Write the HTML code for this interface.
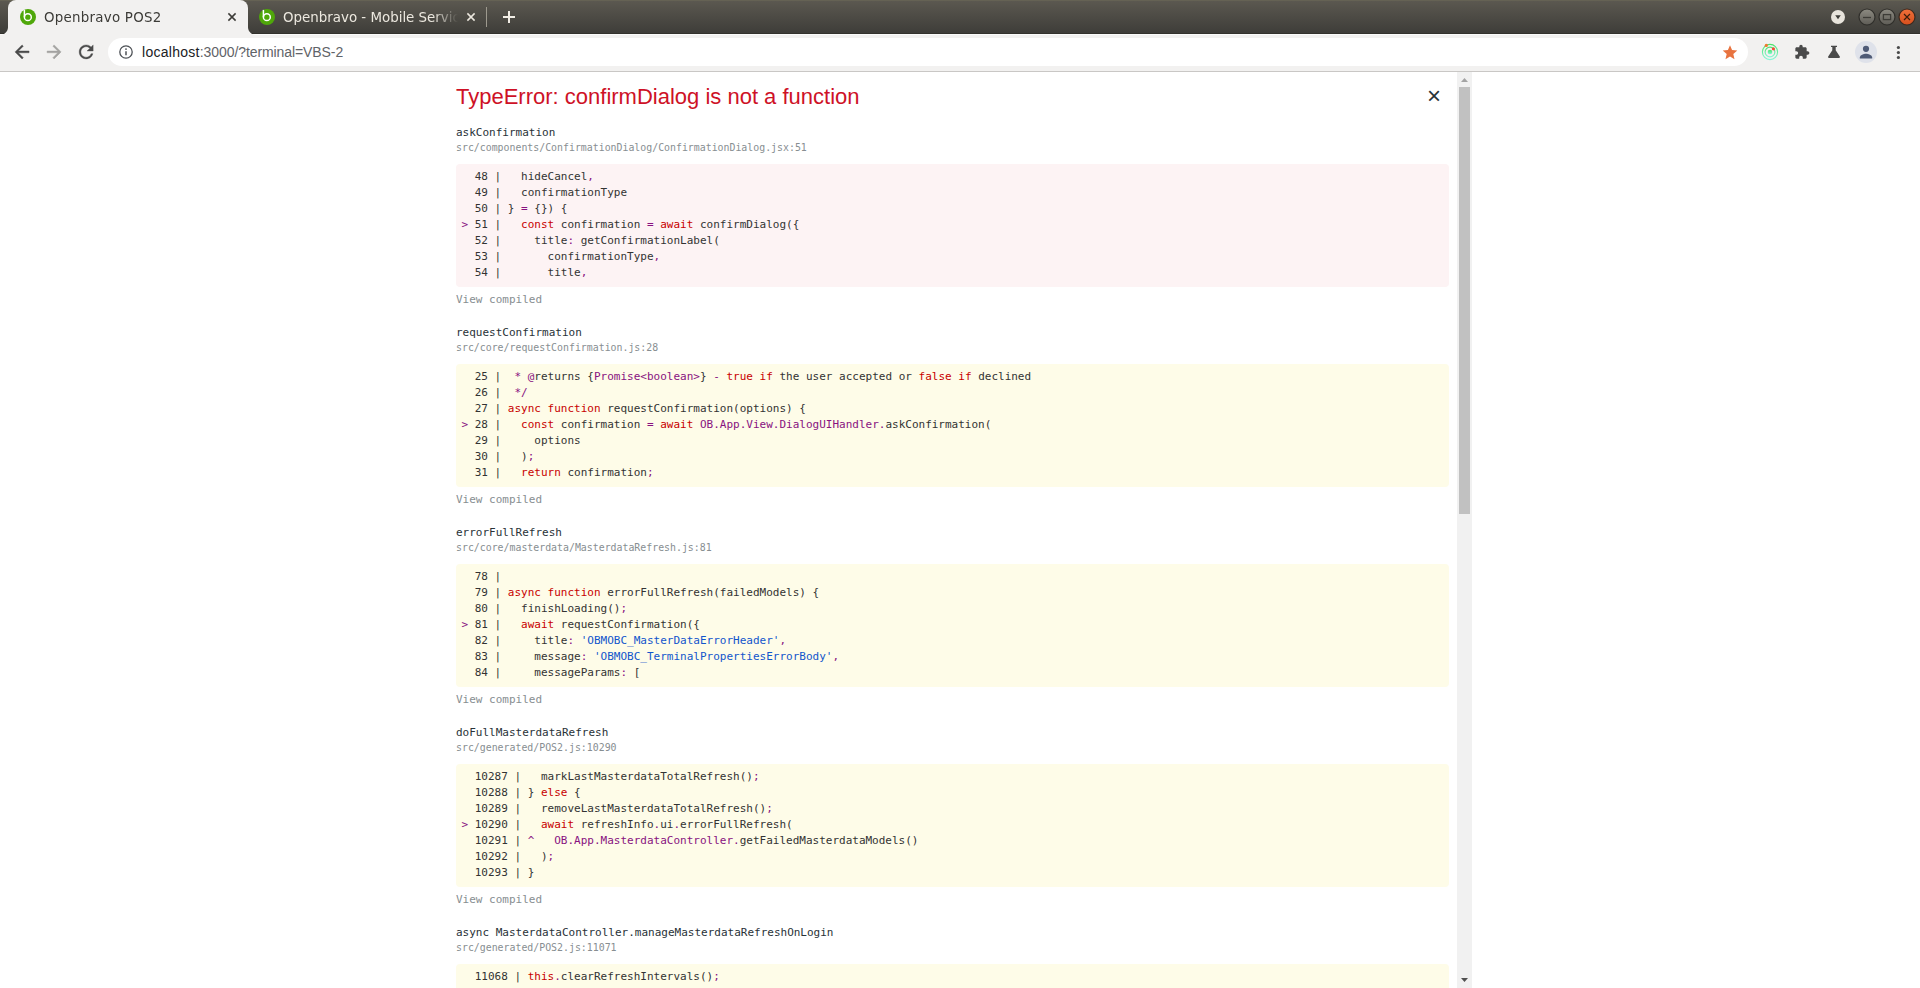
<!DOCTYPE html>
<html lang="en">
<head>
<meta charset="utf-8">
<title>Openbravo POS2</title>
<style>
html,body{margin:0;padding:0;}
body{width:1920px;height:988px;overflow:hidden;background:#fff;position:relative;font-family:"Liberation Sans",sans-serif;}
#tabstrip{position:absolute;left:0;top:0;width:1920px;height:34px;background:linear-gradient(#656254 0,#656254 1px,#5b5850 1px,#3e3d39 33px,#33322d 33px,#33322d 34px);}
#toolbar{position:absolute;left:0;top:34px;width:1920px;height:37px;background:#f2f1f0;border-bottom:1px solid #c9c7c5;box-shadow:inset 0 1px 0 #fbfbfa;}
.tab{position:absolute;top:0;height:34px;font-family:"DejaVu Sans","Liberation Sans",sans-serif;font-size:13.4px;line-height:34px;white-space:nowrap;}
#tab1{letter-spacing:0.25px;left:8px;width:240px;height:35px;z-index:2;background:#f2f1f0;border-radius:8px 8px 0 0;color:#3c3b37;}
#tab1:before,#tab1:after{content:"";position:absolute;bottom:0;width:8px;height:8px;}
#tab1:before{left:-8px;background:radial-gradient(circle at 0 0,transparent 7.5px,#f2f1f0 8.5px);}
#tab1:after{right:-8px;background:radial-gradient(circle at 100% 0,transparent 7.5px,#f2f1f0 8.5px);}
#tab2{left:247px;width:236px;color:#ece8df;}
.tab .ttl{position:absolute;left:36px;top:1px;height:33px;will-change:transform;}
#tab2 .ttl{width:175px;overflow:hidden;-webkit-mask-image:linear-gradient(90deg,#000 150px,transparent 175px);mask-image:linear-gradient(90deg,#000 150px,transparent 175px);}
.tab .fav{position:absolute;left:12px;top:9px;width:16px;height:16px;}
.tab .cls{position:absolute;left:216px;top:9px;width:16px;height:16px;}
#tab2 .cls{left:216px;}
#sep{position:absolute;left:486px;top:7px;width:1px;height:20px;background:#9d998e;}
#omni{position:absolute;left:108px;top:4px;width:1640px;height:28px;border-radius:14px;background:#fff;}
#url{position:absolute;left:34px;top:0;line-height:28px;font-size:14px;color:#5f6368;white-space:nowrap;}
#url b{font-weight:normal;color:#202124;letter-spacing:0.28px;}#url span{letter-spacing:-0.085px;}
.ico{position:absolute;}
#page{position:absolute;left:0;top:72px;width:1920px;height:916px;background:#fff;overflow:hidden;}
#ov{position:absolute;left:448px;top:0;width:1024px;height:916px;box-sizing:border-box;padding:8px 23px 8px 8px;overflow:hidden;font-family:"DejaVu Sans Mono","Liberation Mono",monospace;font-size:11px;line-height:16px;color:#293238;text-align:left;}
#hd{font-family:"Liberation Sans",sans-serif;font-size:22px;line-height:33px;color:#ce1126;margin:0 32px 12px 0;font-weight:normal;}
#x{position:absolute;right:15px;top:0;padding:16px;font-size:24px;line-height:16px;color:#293238;font-family:"Liberation Sans",sans-serif;}
.fn{height:16px;}
.ln{font-size:9.9px;line-height:14px;height:14px;margin-bottom:9px;color:#878e91;}
pre{margin:0 0 5px 0;padding:5px 5.5px 6px;border-radius:4px;background:rgba(251,245,180,0.3);font-family:inherit;font-size:11px;line-height:16px;color:#333;white-space:pre;}
pre.e{background:rgba(206,17,38,0.05);}
.vc{height:16px;margin-bottom:17px;color:#878e91;}
.k{color:#c80000}.p{color:#881280}.s{color:#1155cc}
#sb{position:absolute;left:1457px;top:72px;width:15px;height:916px;background:#f1f1f1;}
#th{position:absolute;left:2px;top:15px;width:11px;height:427px;background:#c1c1c1;}
</style>
</head>
<body>
<div id="tabstrip">
  <div class="tab" id="tab1">
    <svg class="fav" viewBox="0 0 16 16"><circle cx="8" cy="8" r="8" fill="#4fa70a"/><circle cx="7.85" cy="8.15" r="3.45" fill="none" stroke="#fff" stroke-width="1.5"/><path d="M4.4 0.9V8.1" stroke="#fff" stroke-width="1.5" fill="none"/></svg>
    <span class="ttl">Openbravo POS2</span>
    <svg class="cls" viewBox="0 0 16 16"><path d="M4.4 4.4l7.2 7.2M11.6 4.4l-7.2 7.2" stroke="#3c3b37" stroke-width="1.5" fill="none"/></svg>
  </div>
  <div class="tab" id="tab2">
    <svg class="fav" viewBox="0 0 16 16"><circle cx="8" cy="8" r="8" fill="#4fa70a"/><circle cx="7.85" cy="8.15" r="3.45" fill="none" stroke="#fff" stroke-width="1.5"/><path d="M4.4 0.9V8.1" stroke="#fff" stroke-width="1.5" fill="none"/></svg>
    <span class="ttl">Openbravo - Mobile Services</span>
    <svg class="cls" viewBox="0 0 16 16"><path d="M4.4 4.4l7.2 7.2M11.6 4.4l-7.2 7.2" stroke="#ece8df" stroke-width="1.5" fill="none"/></svg>
  </div>
  <div id="sep"></div>
  <svg class="ico" style="left:501px;top:9px" width="16" height="16" viewBox="0 0 16 16"><path d="M8 2v12M2 8h12" stroke="#f1ede5" stroke-width="2" fill="none"/></svg>
  <svg class="ico" style="left:1830px;top:9px" width="16" height="16" viewBox="0 0 16 16"><circle cx="8" cy="8" r="7" fill="#e8e4dc"/><path d="M5.2 6.3h5.6L8 10.2z" fill="#3d3c38"/></svg>
  <svg class="ico" style="left:1858px;top:8px" width="18" height="18" viewBox="0 0 18 18"><defs><linearGradient id="g1" x1="0" y1="0" x2="0" y2="1"><stop offset="0" stop-color="#8d8b82"/><stop offset="1" stop-color="#5e5c56"/></linearGradient><linearGradient id="g2" x1="0" y1="0" x2="0" y2="1"><stop offset="0" stop-color="#f0703a"/><stop offset="1" stop-color="#d64f1d"/></linearGradient></defs><circle cx="9" cy="9" r="8" fill="url(#g1)" stroke="#2f2e2a" stroke-width="1.2"/><path d="M5 9.5h8" stroke="#3d3c37" stroke-width="1.3"/></svg>
  <svg class="ico" style="left:1878px;top:8px" width="18" height="18" viewBox="0 0 18 18"><circle cx="9" cy="9" r="8" fill="url(#g1)" stroke="#2f2e2a" stroke-width="1.2"/><rect x="5.4" y="6.6" width="7.2" height="5" fill="none" stroke="#3d3c37" stroke-width="1.3"/></svg>
  <svg class="ico" style="left:1898px;top:8px" width="18" height="18" viewBox="0 0 18 18"><circle cx="9" cy="9" r="8" fill="url(#g2)" stroke="#3a2a20" stroke-width="1.2"/><path d="M6 6l6 6M12 6l-6 6" stroke="#3a1d0c" stroke-width="1.15"/></svg>
</div>
<div id="toolbar">
  <svg class="ico" style="left:0;top:0" width="104" height="37" viewBox="0 0 104 37">
    <g transform="translate(22.04,17.9) scale(0.875) translate(-12,-12)"><path fill="#4a4a4a" stroke="#4a4a4a" stroke-width="0.5" d="M20 11H7.83l5.59-5.59L12 4l-8 8 8 8 1.41-1.41L7.83 13H20v-2z"/></g>
    <g transform="translate(54.1,17.9) scale(0.875) translate(-12,-12)"><path fill="#a4a3a1" stroke="#a4a3a1" stroke-width="0.5" d="M12 4l-1.41 1.41L16.17 11H4v2h12.17l-5.58 5.59L12 20l8-8z"/></g>
    <g transform="translate(86.15,17.9) scale(0.875) translate(-12,-12)"><path fill="#4a4a4a" stroke="#4a4a4a" stroke-width="0.4" d="M17.65 6.35C16.2 4.9 14.21 4 12 4c-4.42 0-7.99 3.58-7.99 8s3.57 8 7.99 8c3.73 0 6.84-2.55 7.730-6h-2.080c-.82 2.33-3.04 4-5.65 4-3.310 0-6-2.690-6-6s2.690-6 6-6c1.660 0 3.140.69 4.220 1.780L13 11h7V4l-2.350 2.350z"/></g>
  </svg>
  <div id="omni">
    <svg class="ico" style="left:10px;top:6px" width="16" height="16" viewBox="0 0 16 16"><circle cx="8" cy="8" r="6.2" fill="none" stroke="#4d5156" stroke-width="1.3"/><path d="M8 7.2v4" stroke="#4d5156" stroke-width="1.5"/><circle cx="8" cy="5.1" r="0.9" fill="#4d5156"/></svg>
    <div id="url"><b>localhost</b><span>:3000/?terminal=VBS-2</span></div>
    <svg class="ico" style="left:1612px;top:4px" width="20" height="20" viewBox="0 0 20 20"><g transform="translate(10,10.2) scale(0.729) translate(-12,-11.5)"><path fill="#e8733f" d="M12 17.27L18.18 21l-1.64-7.030L22 9.240l-7.190-.61L12 2 9.190 8.630 2 9.240l5.460 4.730L5.820 21z"/></g></svg>
  </div>
  <svg class="ico" style="left:1761px;top:9px" width="18" height="18" viewBox="0 0 18 18"><defs><linearGradient id="g3" x1="0" y1="0" x2="0" y2="1"><stop offset="0" stop-color="#4be36b"/><stop offset="1" stop-color="#86f6d6"/></linearGradient></defs><circle cx="9" cy="9" r="7.6" fill="none" stroke="url(#g3)" stroke-width="1.1"/><circle cx="9" cy="9" r="4.9" fill="none" stroke="url(#g3)" stroke-width="1.1"/><circle cx="9" cy="9" r="2.3" fill="url(#g3)"/><circle cx="5.3" cy="2.4" r="1.6" fill="#f07a2c"/><circle cx="12.4" cy="5.8" r="1.6" fill="#f04a34"/></svg>
  <svg class="ico" style="left:1794px;top:10px" width="16" height="16" viewBox="0 0 24 24"><path fill="#4a4a4a" d="M20.5 11H19V7c0-1.100-.9-2-2-2h-4V3.500C13 2.120 11.880 1 10.500 1S8 2.120 8 3.500V5H4c-1.100 0-1.990.9-1.990 2v3.800H3.500c1.490 0 2.700 1.210 2.700 2.700s-1.210 2.700-2.700 2.700H2V20c0 1.100.9 2 2 2h3.800v-1.500c0-1.490 1.210-2.700 2.700-2.700 1.490 0 2.700 1.210 2.700 2.700V22H17c1.100 0 2-.9 2-2v-4h1.500c1.380 0 2.500-1.120 2.500-2.500S21.880 11 20.500 11z"/></svg>
  <svg class="ico" style="left:1826px;top:10px" width="16" height="16" viewBox="0 0 16 16"><path fill="#4a4a4a" d="M5 1.700h6v1.400H5zM6.300 3.100h3.400v3.200l4.100 6.300c.4.700 0 1.500-.8 1.500H3c-.8 0-1.200-.8-.8-1.500l4.100-6.300z"/></svg>
  <svg class="ico" style="left:1855px;top:7px" width="22" height="22" viewBox="0 0 22 22"><circle cx="11" cy="11" r="11" fill="#dfe2ea"/><circle cx="11" cy="7.800" r="3.100" fill="#4f5b76"/><path d="M4.800 16.600c0-2.600 4.100-3.800 6.200-3.800s6.200 1.200 6.200 3.800v0.900H4.800z" fill="#4f5b76"/></svg>
  <svg class="ico" style="left:1890px;top:8px" width="16" height="20" viewBox="0 0 16 20"><circle cx="8.400" cy="5.500" r="1.600" fill="#4a4a4a"/><circle cx="8.400" cy="10.500" r="1.600" fill="#4a4a4a"/><circle cx="8.400" cy="15.500" r="1.600" fill="#4a4a4a"/></svg>
</div>
<div id="page">
<div id="ov">
<div id="x">×</div>
<div id="hd">TypeError: confirmDialog is not a function</div>
<div class="fn">askConfirmation</div>
<div class="ln">src/components/ConfirmationDialog/ConfirmationDialog.jsx:51</div>
<pre class="e">  48 |   hideCancel<span class="p">,</span>
  49 |   confirmationType
  50 | } <span class="p">=</span> {}) {
<span class="p">&gt;</span> 51 |   <span class="k">const</span> confirmation <span class="p">=</span> <span class="k">await</span> confirmDialog({
  52 |     title<span class="p">:</span> getConfirmationLabel(
  53 |       confirmationType<span class="p">,</span>
  54 |       title<span class="p">,</span></pre>
<div class="vc">View compiled</div>
<div class="fn">requestConfirmation</div>
<div class="ln">src/core/requestConfirmation.js:28</div>
<pre>  25 |  <span class="p">*</span> <span class="p">@</span>returns {<span class="p">Promise&lt;boolean&gt;</span>} <span class="p">-</span> <span class="k">true</span> <span class="k">if</span> the user accepted or <span class="k">false</span> <span class="k">if</span> declined
  26 |  <span class="p">*/</span>
  27 | <span class="k">async</span> <span class="k">function</span> requestConfirmation(options) {
<span class="p">&gt;</span> 28 |   <span class="k">const</span> confirmation <span class="p">=</span> <span class="k">await</span> <span class="p">OB.App.View.DialogUIHandler.</span>askConfirmation(
  29 |     options
  30 |   )<span class="p">;</span>
  31 |   <span class="k">return</span> confirmation<span class="p">;</span></pre>
<div class="vc">View compiled</div>
<div class="fn">errorFullRefresh</div>
<div class="ln">src/core/masterdata/MasterdataRefresh.js:81</div>
<pre>  78 | 
  79 | <span class="k">async</span> <span class="k">function</span> errorFullRefresh(failedModels) {
  80 |   finishLoading()<span class="p">;</span>
<span class="p">&gt;</span> 81 |   <span class="k">await</span> requestConfirmation({
  82 |     title<span class="p">:</span> <span class="s">'OBMOBC_MasterDataErrorHeader'</span><span class="p">,</span>
  83 |     message<span class="p">:</span> <span class="s">'OBMOBC_TerminalPropertiesErrorBody'</span><span class="p">,</span>
  84 |     messageParams<span class="p">:</span> [</pre>
<div class="vc">View compiled</div>
<div class="fn">doFullMasterdataRefresh</div>
<div class="ln">src/generated/POS2.js:10290</div>
<pre>  10287 |   markLastMasterdataTotalRefresh()<span class="p">;</span>
  10288 | } <span class="k">else</span> {
  10289 |   removeLastMasterdataTotalRefresh()<span class="p">;</span>
<span class="p">&gt;</span> 10290 |   <span class="k">await</span> refreshInfo<span class="p">.</span>ui<span class="p">.</span>errorFullRefresh(
  10291 | <span class="p">^</span>   <span class="p">OB.App.MasterdataController.</span>getFailedMasterdataModels()
  10292 |   )<span class="p">;</span>
  10293 | }</pre>
<div class="vc">View compiled</div>
<div class="fn">async MasterdataController.manageMasterdataRefreshOnLogin</div>
<div class="ln">src/generated/POS2.js:11071</div>
<pre>  11068 | <span class="k">this</span><span class="p">.</span>clearRefreshIntervals()<span class="p">;</span>
  11069 | 
  11070 | </pre>
</div>
</div>
<div id="sb"><div id="th"></div><svg class="ico" style="left:0;top:0" width="15" height="15" viewBox="0 0 15 15"><path d="M4 10h7L7.500 6z" fill="#a3a3a3"/></svg><svg class="ico" style="left:0;top:901px" width="15" height="15" viewBox="0 0 15 15"><path d="M4 5h7L7.500 9z" fill="#505050"/></svg></div>
</body>
</html>
